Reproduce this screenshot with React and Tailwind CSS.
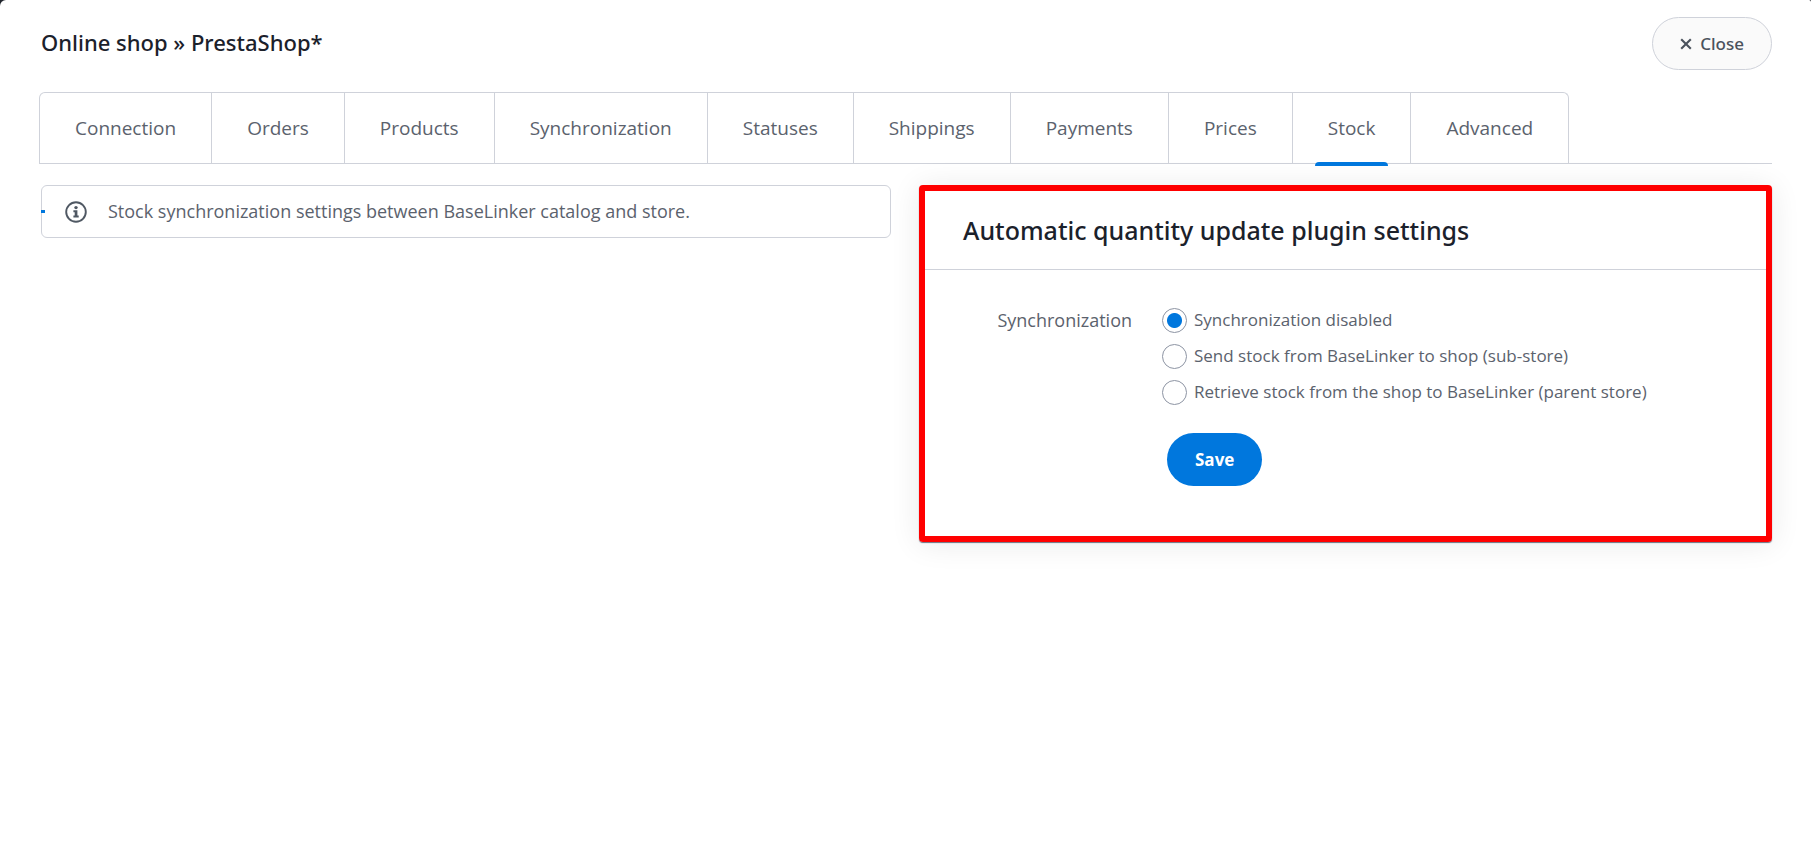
import React, { useState } from "react";

const TABS = [
  "Connection",
  "Orders",
  "Products",
  "Synchronization",
  "Statuses",
  "Shippings",
  "Payments",
  "Prices",
  "Stock",
  "Advanced",
];

const SYNC_OPTIONS = [
  { value: "disabled", label: "Synchronization disabled" },
  { value: "send", label: "Send stock from BaseLinker to shop (sub-store)" },
  { value: "retrieve", label: "Retrieve stock from the shop to BaseLinker (parent store)" },
];

function InfoIcon() {
  return (
    <svg viewBox="0 0 22 22" className="h-[22px] w-[22px] shrink-0 text-[#4f5863]" aria-hidden="true">
      <circle cx="11" cy="11" r="9.8" fill="none" stroke="currentColor" strokeWidth="1.9" />
      <circle cx="11" cy="6.6" r="1.7" fill="currentColor" />
      <path d="M8.4 9.3h4v5.2h1.3v2H8.4v-2h1.3v-3.2H8.4z" fill="currentColor" />
    </svg>
  );
}

function CloseIcon() {
  return (
    <svg viewBox="0 0 12 12" className="h-3 w-3" aria-hidden="true">
      <path d="M1.2 1.2l9.6 9.6M10.8 1.2l-9.6 9.6" fill="none" stroke="currentColor" strokeWidth="2.1" />
    </svg>
  );
}

function Tabs({ active, onChange }) {
  return (
    <nav className="flex border-b border-[#cfd2da]">
      <div className="flex rounded-t-md border border-b-0 border-[#cfd2da]">
        {TABS.map((tab) => (
          <button
            key={tab}
            type="button"
            onClick={() => onChange(tab)}
            className="relative h-[70px] border-l border-[#cfd2da] px-[35px] text-[19px] first:border-l-0"
          >
            {tab}
            {tab === active && (
              <span className="absolute inset-x-[22px] -bottom-[3px] h-1 rounded-t-sm bg-[#0077dd]" />
            )}
          </button>
        ))}
      </div>
    </nav>
  );
}

export default function App() {
  const [activeTab, setActiveTab] = useState("Stock");
  const [sync, setSync] = useState("disabled");

  return (
    <div className="min-h-screen bg-[#20242c]">
      <div className="min-h-screen rounded-tl-md rounded-tr-xs bg-white px-[39px] pt-[17px] font-['Open_Sans',sans-serif] text-[#5b626d]">
        <header className="flex items-center justify-between pl-0.5">
          <h1 className="pb-0.5 font-['Noto_Sans',sans-serif] text-[22px] font-medium text-[#1b212b]">
            Online shop » PrestaShop*
          </h1>
          <button
            type="button"
            className="flex h-[53px] items-center gap-2 rounded-full border border-[#cfd2da] bg-[#fafafa] px-[27px] font-['Noto_Sans',sans-serif] text-[17px] font-medium text-[#4a525d]"
          >
            <CloseIcon />
            Close
          </button>
        </header>

        <div className="mt-[22px]">
          <Tabs active={activeTab} onChange={setActiveTab} />
        </div>

        <main className="mt-[21px] grid grid-cols-[850fr_853fr] items-start gap-7 pl-0.5">
          <div className="relative flex h-[53px] items-center gap-[21px] rounded-md border border-[#cfd2da] px-[23px] text-lg">
            <span className="absolute -left-px top-6 h-[3px] w-1 bg-[#0077dd]" />
            <InfoIcon />
            <p className="pb-0.5">Stock synchronization settings between BaseLinker catalog and store.</p>
          </div>

          <section className="rounded-sm border-[6px] border-[#ff0000] shadow-[0_1px_1px_#6b7280,0_2px_30px_rgba(20,30,30,0.09)]">
            <h2 className="border-b border-[#cfd2da] px-[38px] py-5 font-['Noto_Sans',sans-serif] text-[25px] leading-[38px] font-medium text-[#1b212b]">
              Automatic quantity update plugin settings
            </h2>
            <form
              className="flex gap-[30px] pt-[35px] pb-[50px] text-lg leading-[30px]"
              onSubmit={(e) => e.preventDefault()}
            >
              <span id="sync-label" className="w-[207px] shrink-0 text-right">
                Synchronization
              </span>
              <div>
                <div
                  role="radiogroup"
                  aria-labelledby="sync-label"
                  className="flex flex-col gap-[6px] text-[17px] leading-[30px]"
                >
                  {SYNC_OPTIONS.map((opt) => (
                    <label key={opt.value} className="flex items-center gap-[7px]">
                      <input
                        type="radio"
                        name="sync"
                        value={opt.value}
                        checked={sync === opt.value}
                        onChange={() => setSync(opt.value)}
                        className="h-[25px] w-[25px] shrink-0 appearance-none rounded-full border border-[#8d94a3] bg-white checked:bg-[radial-gradient(circle,#0077dd_7px,transparent_8px)]"
                      />
                      {opt.label}
                    </label>
                  ))}
                </div>
                <button
                  type="submit"
                  className="mt-[26px] ml-[5px] h-[53px] rounded-full bg-[#0077dd] px-7 text-[17px] font-bold text-white"
                >
                  Save
                </button>
              </div>
            </form>
          </section>
        </main>
      </div>
    </div>
  );
}
